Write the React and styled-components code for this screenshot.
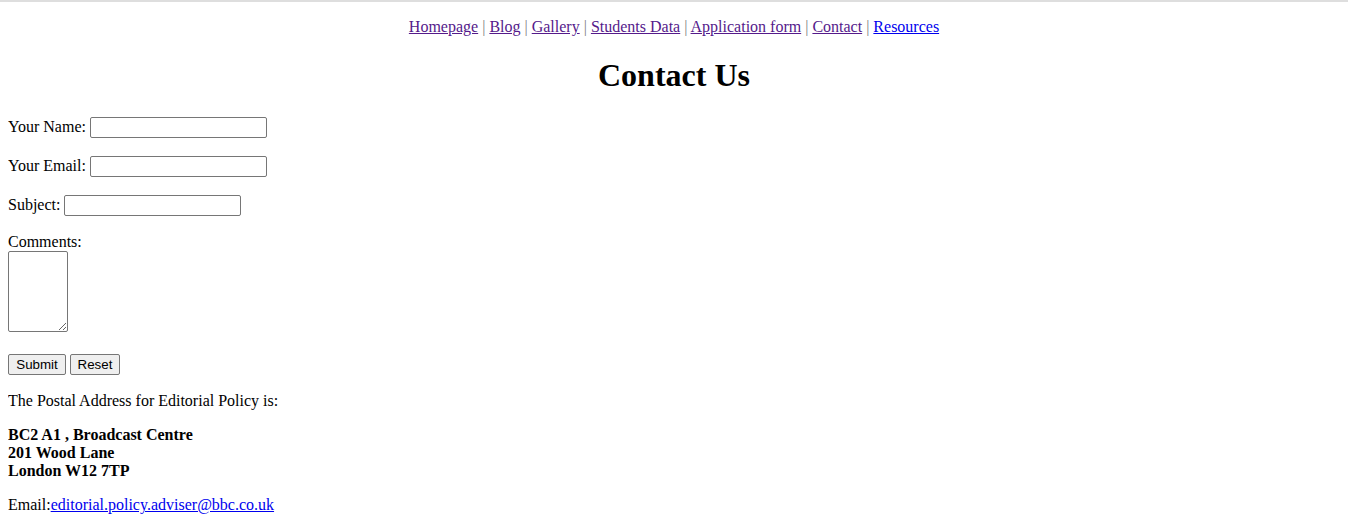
import React from 'react';
import styled, { createGlobalStyle } from 'styled-components';

const GlobalStyle = createGlobalStyle`
	html {
		border-top: 2px solid #dedede;
	}
	body {
		margin: 0 8px 8px;
		font-family: 'Liberation Serif', 'Times New Roman', serif;
		font-size: 16px;
		color: #000;
		background: #fff;
	}
`;

const Nav = styled.p`
	margin: 16px 0;
	text-align: center;
`;

const NavLink = styled.a`
	color: ${(p) => (p.visited ? '#551a8b' : '#0000ee')};
	text-decoration: underline;
`;

const Sep = styled.span`
	color: #808080;
`;

const Title = styled.h1`
	margin: 21.44px 0;
	font-size: 32px;
	font-weight: bold;
	text-align: center;
`;

const Row = styled.p`
	margin: 16px 0;
`;

const TextInput = styled.input`
	box-sizing: border-box;
	width: ${(p) => p.w || 177}px;
	height: 21px;
	margin: 1px 0;
	padding: 1px 2px;
	border: 1px solid #767676;
	border-radius: 2px;
	font-family: 'Liberation Sans', Arial, sans-serif;
	font-size: 13.33px;
	vertical-align: baseline;
`;

const Comments = styled.textarea`
	box-sizing: border-box;
	width: 60px;
	height: 81px;
	margin: 0 0 2px;
	padding: 2px;
	border: 1px solid #767676;
	border-radius: 2px;
	font-family: 'Liberation Mono', monospace;
	font-size: 13.33px;
	vertical-align: baseline;
`;

const Button = styled.button`
	box-sizing: border-box;
	width: ${(p) => p.w}px;
	height: 21px;
	margin: 0 4px 1px 0;
	padding: 1px 0;
	background: #efefef;
	border: 1px solid #767676;
	border-radius: 2px;
	font-family: 'Liberation Sans', Arial, sans-serif;
	font-size: 13.33px;
	color: #000;
	text-align: center;
`;

const Text = styled.p`
	margin: 16px 0;
`;

const MailLink = styled.a`
	color: #0000ee;
	text-decoration: underline;
`;

const links = [
	{ label: 'Homepage', visited: true },
	{ label: 'Blog', visited: true },
	{ label: 'Gallery', visited: true },
	{ label: 'Students Data', visited: true },
	{ label: 'Application form', visited: true },
	{ label: 'Contact', visited: true },
	{ label: 'Resources', visited: false },
];

export default function App() {
	return (
		<>
			<GlobalStyle />
			<Nav>
				{links.map((l, i) => (
					<React.Fragment key={l.label}>
						{i > 0 && <Sep> | </Sep>}
						<NavLink href='#' visited={l.visited ? 1 : 0}>
							{l.label}
						</NavLink>
					</React.Fragment>
				))}
			</Nav>
			<Title>Contact Us</Title>
			<form onSubmit={(e) => e.preventDefault()}>
				<Row>
					Your Name: <TextInput type='text' />
				</Row>
				<Row>
					Your Email: <TextInput type='text' />
				</Row>
				<Row>
					Subject: <TextInput type='text' />
				</Row>
				<Row>
					Comments:
					<br />
					<Comments />
				</Row>
				<Row>
					<Button type='submit' w={58}>
						Submit
					</Button>
					<Button type='reset' w={50}>
						Reset
					</Button>
				</Row>
			</form>
			<Text>The Postal Address for Editorial Policy is:</Text>
			<Text>
				<b>
					BC2 A1 , Broadcast Centre
					<br />
					201 Wood Lane
					<br />
					London W12 7TP
				</b>
			</Text>
			<Text>
				Email:<MailLink href='#'>editorial.policy.adviser@bbc.co.uk</MailLink>
			</Text>
		</>
	);
}
